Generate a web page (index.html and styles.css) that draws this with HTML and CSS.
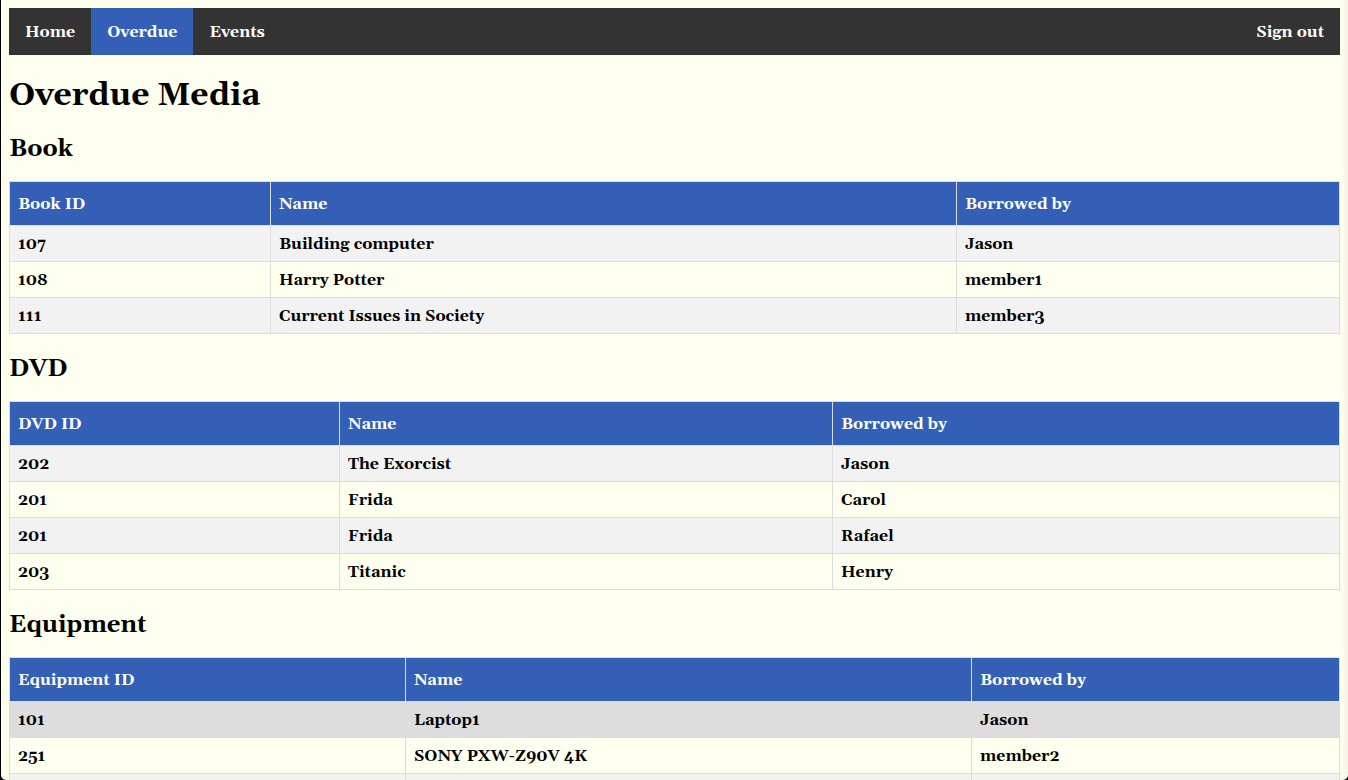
FILE: index.html
```html
<!DOCTYPE html>
<html lang="en">
<head>
<meta charset="utf-8">
<title>Overdue Media</title>
<link rel="stylesheet" href="styles.css">
</head>
<body>
<nav class="topnav">
  <a href="#home">Home</a>
  <a class="active" href="#overdue">Overdue</a>
  <a href="#events">Events</a>
  <a class="signout" href="#signout">Sign out</a>
</nav>
<main>
<h1>Overdue Media</h1>

<h2 id="book">Book</h2>
<table class="media book" aria-labelledby="book">
  <thead><tr><th class="id">Book ID</th><th class="name">Name</th><th>Borrowed by</th></tr></thead>
  <tbody>
    <tr><td>107</td><td>Building computer</td><td>Jason</td></tr>
    <tr><td>108</td><td>Harry Potter</td><td>member1</td></tr>
    <tr><td>111</td><td>Current Issues in Society</td><td>member3</td></tr>
  </tbody>
</table>

<h2 id="dvd">DVD</h2>
<table class="media dvd" aria-labelledby="dvd">
  <thead><tr><th class="id">DVD ID</th><th class="name">Name</th><th>Borrowed by</th></tr></thead>
  <tbody>
    <tr><td>202</td><td>The Exorcist</td><td>Jason</td></tr>
    <tr><td>201</td><td>Frida</td><td>Carol</td></tr>
    <tr><td>201</td><td>Frida</td><td>Rafael</td></tr>
    <tr><td>203</td><td>Titanic</td><td>Henry</td></tr>
  </tbody>
</table>

<h2 id="equipment">Equipment</h2>
<table class="media equipment" aria-labelledby="equipment">
  <thead><tr><th class="id">Equipment ID</th><th class="name">Name</th><th>Borrowed by</th></tr></thead>
  <tbody>
    <tr class="selected"><td>101</td><td>Laptop1</td><td>Jason</td></tr>
    <tr><td>251</td><td>SONY PXW-Z90V 4K</td><td>member2</td></tr>
    <tr><td></td><td></td><td></td></tr>
  </tbody>
</table>
</main>
</body>
</html>
```
FILE: styles.css
```css
html {
  height: 100%;
  overflow: hidden;
  background: #000;
}

body {
  box-sizing: border-box;
  height: 100%;
  margin: 0 0 0 1px;
  padding: 8px 8px 0;
  overflow: hidden;
  border-radius: 0 0 5px 5px;
  background: #fffff0;
  box-shadow: inset -8px 0 8px -8px rgba(0, 0, 0, 0.1);
  font-family: Georgia, Gelasio, "Liberation Serif", serif;
  font-size: 16px;
  line-height: 19px;
  font-weight: bold;
  color: #000;
}

.topnav {
  display: flex;
  background: #333;
}

.topnav a {
  padding: 15px 16px 13px;
  color: #fff;
  text-decoration: none;
}

.topnav .active {
  background: #335fb7;
}

.topnav .signout {
  margin-left: auto;
}

h1 {
  margin: 22px 0 20px;
  font-size: 32px;
  line-height: 37px;
}

h2 {
  margin: 22px 0 18px;
  font-size: 24px;
  line-height: 27px;
}

.media {
  width: 100%;
  table-layout: fixed;
  border-collapse: collapse;
}

.media th,
.media td {
  box-sizing: border-box;
  height: 36px;
  padding: 9px 8px 7px;
  border: 1px solid #ddd;
  text-align: left;
}

.media th {
  padding: 13px 8px 11px;
  background: #335fb7;
  color: #fff;
}

.media tbody tr:nth-child(odd) {
  background: #f2f2f2;
}

.media tbody tr.selected {
  background: #ddd;
}

.book .id { width: 19.62%; }
.book .name { width: 51.58%; }
.dvd .id { width: 24.81%; }
.dvd .name { width: 37.07%; }
.equipment .id { width: 29.77%; }
.equipment .name { width: 42.56%; }
```
